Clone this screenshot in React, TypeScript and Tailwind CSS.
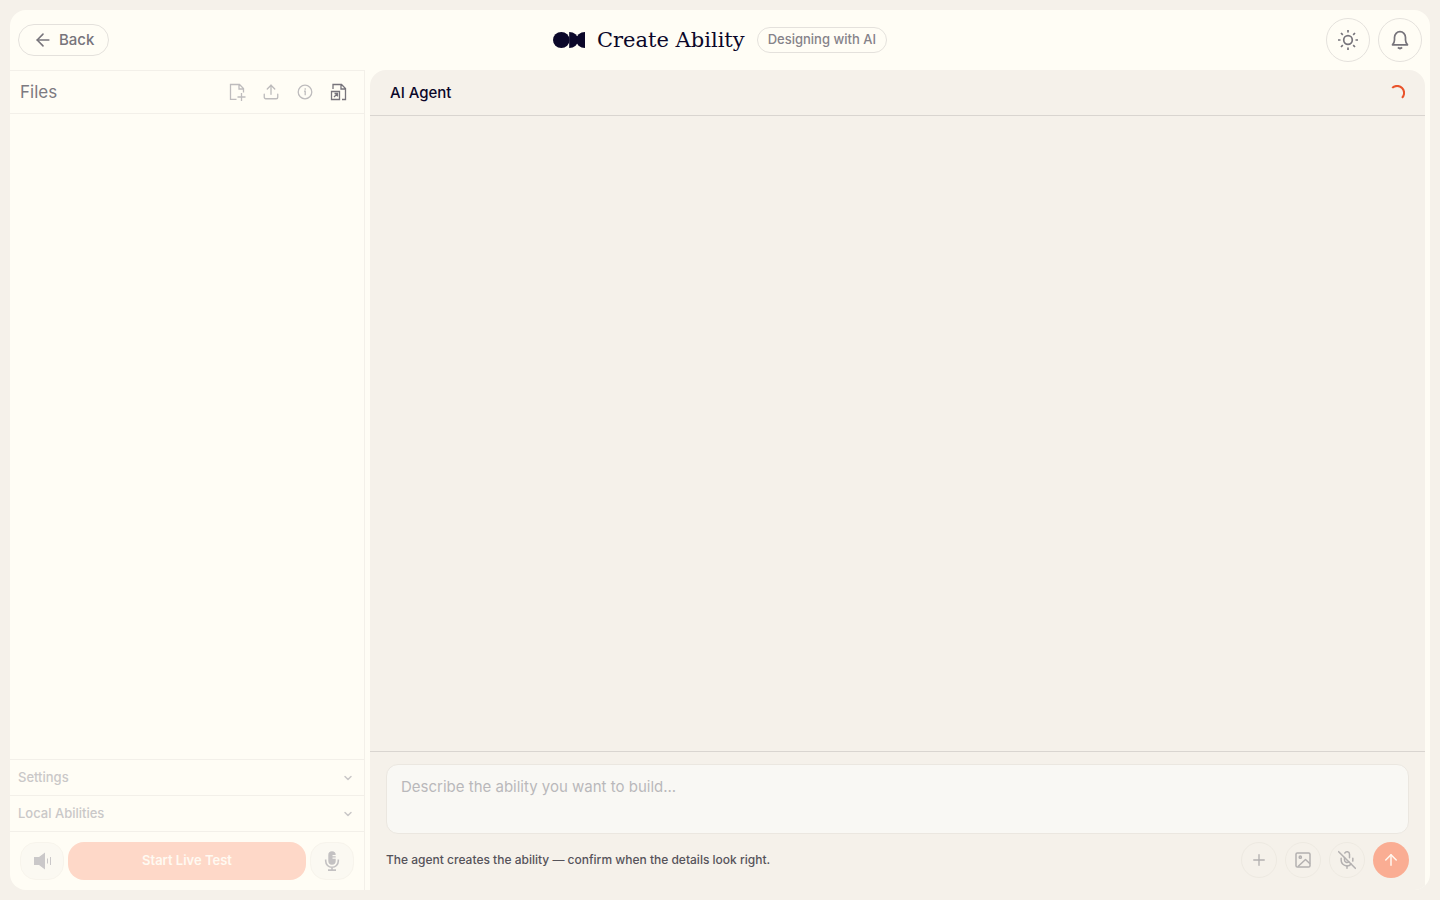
import type { ReactNode } from "react";
import { ArrowLeft, ArrowUp, ChevronDown, MicOff, Plus, Upload } from "lucide-react";

function Logo() {
  return (
    <svg width="32" height="16" viewBox="0 0 32 16" fill="#0b0729" aria-hidden="true">
      <ellipse cx="8.3" cy="8" rx="8.3" ry="8" />
      <path d="M16.2 0A9 8 0 0 1 16.2 16Z" />
      <path d="M32 0A9 8 0 0 0 32 16Z" />
    </svg>
  );
}

function SunIcon() {
  return (
    <svg width="24" height="24" viewBox="0 0 24 24" fill="none" stroke="currentColor" strokeWidth="1.7" aria-hidden="true">
      <circle cx="12" cy="12" r="4.3" />
      <path d="M12 2V4.500M12 19.500V22M2 12H4.500M19.500 12H22M5 5L6.800 6.800M17.200 17.200L19 19M5 19L6.800 17.200M17.200 6.800L19 5" />
    </svg>
  );
}

function BellIcon() {
  return (
    <svg width="24" height="24" viewBox="0 0 24 24" fill="none" stroke="currentColor" strokeWidth="1.7" strokeLinejoin="round" aria-hidden="true">
      <path d="M4.500 16.800Q6.500 14.500 6.500 12V9.500A5.500 5.900 0 0 1 17.500 9.500V12Q17.500 14.500 19.500 16.800Z" />
      <path d="M10 19.300Q12 21.600 14 19.300" strokeWidth="2" />
    </svg>
  );
}

function NewFileIcon() {
  return (
    <svg width="18" height="18" viewBox="0 0 18 18" fill="none" stroke="currentColor" strokeWidth="1.3" aria-hidden="true">
      <path d="M8.500 16.300H2.500V1.500H11.500L15.500 5.500V9.500M11 1.500V6H15.500M13.500 10V18M9.500 14H17.500" />
    </svg>
  );
}

function InfoIcon() {
  return (
    <svg width="18" height="18" viewBox="0 0 18 18" fill="none" stroke="currentColor" strokeWidth="1.3" aria-hidden="true">
      <circle cx="9" cy="9" r="6.800" />
      <path d="M8 8.200H9.200V12.300M9.200 5.300V6.700" />
    </svg>
  );
}

function OpenFileIcon() {
  return (
    <svg width="18" height="18" viewBox="0 0 18 18" fill="none" stroke="currentColor" strokeWidth="1.3" aria-hidden="true">
      <path d="M3 6V1.500H11.500L15.500 5.500V16.500H12M11 1.500V6H15.500M1.500 8.500H9.500V16.500H1.500ZM4 14L7.500 10.500M4.500 10.500H7.500V13.500" />
    </svg>
  );
}

function SpeakerIcon() {
  return (
    <svg width="20" height="20" viewBox="0 0 20 20" fill="currentColor" aria-hidden="true">
      <path d="M2 6H7L13 1.500V18.500L7 14H2Z" />
      <path d="M15.500 7.500V12.500M18.500 6V14" stroke="currentColor" strokeWidth="1" />
    </svg>
  );
}

function StudioMicIcon() {
  return (
    <svg width="20" height="20" viewBox="0 0 20 20" fill="none" stroke="currentColor" strokeWidth="1.6" aria-hidden="true">
      <path d="M6.300 4A3.700 3.700 0 0 1 13.700 4H10.500V5.200H13.700V6.500H10.500V7.700H13.700V10A3.700 3.700 0 0 1 6.300 10Z" fill="currentColor" stroke="none" />
      <path d="M3.700 8.500V10A6.300 6.300 0 0 0 16.300 10V8.500M10 16V19M6 19.100H14" />
    </svg>
  );
}

function ImageIcon() {
  return (
    <svg width="18" height="18" viewBox="0 0 18 18" fill="none" stroke="currentColor" strokeWidth="1.5" strokeLinejoin="round" aria-hidden="true">
      <rect x="2" y="2" width="14" height="14" rx="1.300" />
      <circle cx="6.300" cy="6.200" r="1.100" />
      <path d="M4 15.500L11.500 8.500L16 12.700" />
    </svg>
  );
}

function Spinner() {
  return (
    <svg width="16" height="16" viewBox="0 0 16 16" fill="none" stroke="#e9532b" strokeWidth="2" role="img" aria-label="Loading">
      <path d="M3.200 2.900A7 7 0 0 1 13 12.900" />
    </svg>
  );
}

function RoundButton({ label, disabled, className, children }: { label: string; disabled?: boolean; className: string; children: ReactNode }) {
  return (
    <button type="button" aria-label={label} disabled={disabled} className={`flex shrink-0 items-center justify-center rounded-full ${className}`}>
      {children}
    </button>
  );
}

function Section({ title }: { title: string }) {
  return (
    <button type="button" disabled className="flex h-9 w-full items-center justify-between border-t border-[#f3f0e9] pr-2.5 pl-2 text-[13px] font-medium text-[#cac8c8]">
      {title}
      <ChevronDown size={12} strokeWidth={3} />
    </button>
  );
}

function Sidebar() {
  return (
    <aside className="flex w-[355px] shrink-0 flex-col border-t border-r border-[#f3f0e9]">
      <div className="flex h-[43px] items-center justify-between border-b border-[#f3f0e9] pr-4 pl-2.5">
        <h2 className="text-[17px] leading-6 text-[#7d7a81]">Files</h2>
        <div className="flex items-center gap-4 text-[#bebcbd]">
          <button type="button" aria-label="New file" disabled><NewFileIcon /></button>
          <button type="button" aria-label="Upload" disabled><Upload size={18} strokeWidth={1.8} /></button>
          <button type="button" aria-label="File details" disabled><InfoIcon /></button>
          <button type="button" aria-label="Open file" className="text-[#77747b]"><OpenFileIcon /></button>
        </div>
      </div>
      <div className="flex-1" />
      <Section title="Settings" />
      <Section title="Local Abilities" />
      <div className="flex gap-1 border-t border-[#f3f0e9] p-2.5">
        <button type="button" aria-label="Sound" disabled className="flex h-[38px] w-11 items-center justify-center rounded-2xl border border-[#f7f4ec] bg-[#fbf9f2] text-[#cac8c9]"><SpeakerIcon /></button>
        <button type="button" disabled className="h-[38px] flex-1 rounded-2xl bg-[#fed8c8] text-[13px] font-semibold text-[#fffaf2]">Start Live Test</button>
        <button type="button" aria-label="Microphone" disabled className="flex h-[38px] w-11 items-center justify-center rounded-2xl border border-[#f7f4ec] bg-[#fbf9f2] text-[#c3c1c2]"><StudioMicIcon /></button>
      </div>
    </aside>
  );
}

function AgentPanel() {
  return (
    <main className="flex min-w-0 flex-1 flex-col rounded-t-2xl bg-[#f5f1ea]">
      <div className="flex h-[46px] items-center justify-between border-b border-[#d9d5d0] px-5">
        <h2 className="text-[15px] leading-5 font-medium text-[#0b0729]">AI Agent</h2>
        <Spinner />
      </div>
      <div className="flex-1" />
      <form className="flex flex-col gap-2 border-t border-[#d9d5d0] px-4 py-3">
        <textarea aria-label="Ability description" placeholder="Describe the ability you want to build..." className="block h-[70px] w-full resize-none rounded-xl border border-[#ebe7e0] bg-[#f9f8f4] px-3.5 py-2.5 text-[15px] leading-6 text-[#0b0729] outline-none placeholder:text-[#b9b8bb]" />
        <div className="flex items-center justify-between">
          <p className="text-xs font-medium text-[#55535a]">The agent creates the ability — confirm when the details look right.</p>
          <div className="flex gap-2 text-[#b3b0b0]">
            <RoundButton label="Add" disabled className="size-9 border border-[#ede9e1]"><Plus size={18} strokeWidth={1.8} /></RoundButton>
            <RoundButton label="Add image" disabled className="size-9 border border-[#ede9e1]"><ImageIcon /></RoundButton>
            <RoundButton label="Voice input off" disabled className="size-9 border border-[#ede9e1]"><MicOff size={20} strokeWidth={1.8} /></RoundButton>
            <RoundButton label="Send" disabled className="size-9 bg-[#faad93] text-[#fff7ef]"><ArrowUp size={18} strokeWidth={2} /></RoundButton>
          </div>
        </div>
      </form>
    </main>
  );
}

export default function App() {
  return (
    <div className="h-screen bg-[#f5f1ea] p-2.5 font-['Inter','Liberation_Sans',sans-serif]">
      <div className="flex h-full flex-col overflow-hidden rounded-2xl bg-[#fffdf5]">
        <header className="grid h-[60px] shrink-0 grid-cols-[1fr_auto_1fr] items-center px-2">
          <button type="button" className="flex h-8 items-center gap-1.5 justify-self-start rounded-full border border-[#e4e1dc] px-3.5 text-[15px] font-medium text-[#77747b]">
            <ArrowLeft size={20} strokeWidth={1.9} />
            Back
          </button>
          <div className="flex items-center gap-3">
            <Logo />
            <h1 className="font-['DejaVu_Serif',serif] text-[21px] leading-7 text-[#0b0729]">Create Ability</h1>
            <span className="flex h-[26px] items-center rounded-full border border-[#e4e1dc] px-2.5 text-[13px] font-medium text-[#858289]">Designing with AI</span>
          </div>
          <div className="flex gap-2 justify-self-end text-[#77747b]">
            <RoundButton label="Toggle theme" className="size-11 border border-[#e4e1dc]"><SunIcon /></RoundButton>
            <RoundButton label="Notifications" className="size-11 border border-[#e4e1dc]"><BellIcon /></RoundButton>
          </div>
        </header>
        <div className="flex min-h-0 flex-1 gap-[5px] pr-[5px]">
          <Sidebar />
          <AgentPanel />
        </div>
      </div>
    </div>
  );
}
